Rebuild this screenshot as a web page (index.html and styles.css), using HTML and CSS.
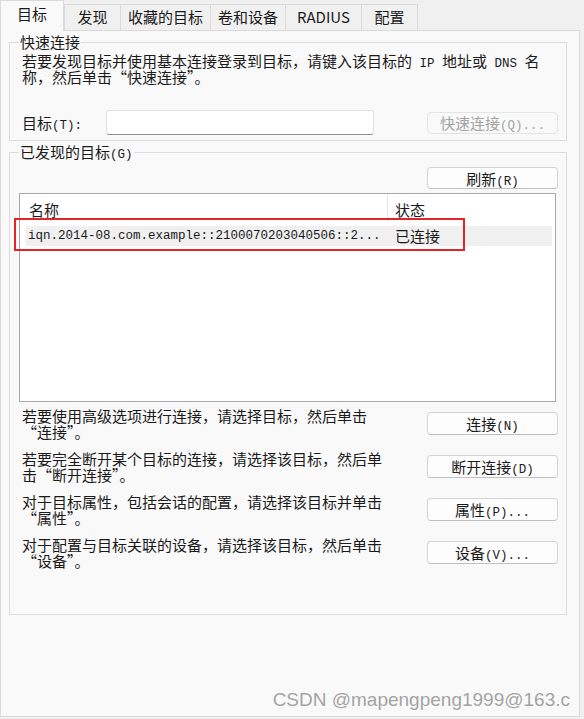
FILE: index.html
```html
<!DOCTYPE html>
<html lang="zh-CN">

<head>
    <meta charset="UTF-8">
    <meta name="viewport" content="width=device-width, initial-scale=1.0">
    <title>iSCSI 发起程序 属性</title>
    <link rel="stylesheet" href="styles.css">
</head>

<body>

    <div class="window">
        <div class="tabs">
            <div class="tab active">目标</div>
            <div class="tab">发现</div>
            <div class="tab">收藏的目标</div>
            <div class="tab">卷和设备</div>
            <div class="tab wide">RADIUS</div>
            <div class="tab">配置</div>
        </div>

        <div class="panel">
            <fieldset class="group quick">
                <legend>快速连接</legend>
                <p class="desc">若要发现目标并使用基本连接登录到目标，请键入该目标的<span class="mono"> IP </span>地址或<span class="mono"> DNS </span>名<br>称，然后单击“快速连接”。</p>
                <div class="target-row">
                    <label class="target-label" for="target">目标<span class="mono">(T):</span></label>
                    <input class="target-input" id="target" type="text">
                    <button class="btn" disabled>快速连接<span class="mono">(Q)...</span></button>
                </div>
            </fieldset>

            <fieldset class="group found">
                <legend>已发现的目标<span class="mono">(G)</span></legend>
                <div class="refresh-row">
                    <button class="btn">刷新<span class="mono">(R)</span></button>
                </div>

                <div class="list">
                    <div class="list-head">
                        <div class="col-name">名称</div>
                        <div class="col-state">状态</div>
                    </div>
                    <div class="list-row">
                        <div class="col-name mono">iqn.2014-08.com.example::2100070203040506::2...</div>
                        <div class="col-state">已连接</div>
                    </div>
                    <!-- red annotation box from the screenshot -->
                    <div class="mark"></div>
                </div>

                <div class="action">
                    <p class="desc">若要使用高级选项进行连接，请选择目标，然后单击<br>“连接”。</p>
                    <button class="btn">连接<span class="mono">(N)</span></button>
                </div>
                <div class="action">
                    <p class="desc">若要完全断开某个目标的连接，请选择该目标，然后单<br>击“断开连接”。</p>
                    <button class="btn">断开连接<span class="mono">(D)</span></button>
                </div>
                <div class="action">
                    <p class="desc">对于目标属性，包括会话的配置，请选择该目标并单击<br>“属性”。</p>
                    <button class="btn">属性<span class="mono">(P)...</span></button>
                </div>
                <div class="action">
                    <p class="desc">对于配置与目标关联的设备，请选择该目标，然后单击<br>“设备”。</p>
                    <button class="btn">设备<span class="mono">(V)...</span></button>
                </div>
            </fieldset>
        </div>

        <div class="watermark">CSDN @mapengpeng1999@163.c</div>
    </div>

</body>

</html>
```

FILE: styles.css
```css
body {
    margin: 0;
    background-color: #f0f0f0;
    font-family: "Noto Sans CJK SC", sans-serif;
    font-size: 15px;
    color: #1a1a1a;
}

.mono {
    font-family: "Liberation Mono", "Noto Sans CJK SC", monospace;
    font-size: 12.5px;
    line-height: 10px;
}

.window {
    position: relative;
    width: 580px;
    height: 719px;
}

/* tab strip */
.tabs {
    display: flex;
    align-items: flex-end;
    height: 31px;
}

.tab {
    box-sizing: border-box;
    height: 26px;
    min-width: 57px;
    margin-bottom: 1px;
    margin-left: -1px;
    padding: 0 7px;
    border: 1px solid #dadada;
    border-bottom: none;
    background-color: #f0f0f0;
    line-height: 24px;
    text-align: center;
    white-space: nowrap;
}

.tab.wide {
    padding: 0 11px;
}

.tab.active {
    position: relative;
    z-index: 1;
    width: 64px;
    height: 31px;
    margin: 0;
    padding-bottom: 4px;
    background-color: #f9f9f9;
    line-height: 26px;
}

.tab.active + .tab {
    margin-left: 0;
}

.panel {
    box-sizing: border-box;
    height: 687px;
    margin-top: -1px;
    padding: 0 12px 0 8px;
    border: 1px solid #dadada;
    background-color: #f9f9f9;
}

/* group boxes */
.group {
    box-sizing: border-box;
    min-width: 0;
    margin: 0;
    padding: 0 8px 7px 9px;
    border: 1px solid #dcdcdc;
}

.group legend {
    padding: 0 1px;
    line-height: 20px;
}

.quick {
    margin-top: 1px;
    padding-bottom: 5px;
}

.found {
    height: 473px;
    margin-top: 1px;
}

.desc {
    margin: 1px 0 0 3px;
    line-height: 16px;
    white-space: nowrap;
}

.target-row {
    display: flex;
    align-items: center;
    height: 25px;
    margin-top: 25px;
}

.target-label {
    width: 84px;
    margin-left: 3px;
}

.target-input {
    box-sizing: border-box;
    width: 268px;
    height: 25px;
    margin: 0;
    border: 1px solid #e3e3e3;
    border-bottom-color: #8f8f8f;
    border-radius: 3px;
    background-color: #fff;
}

.target-row .btn {
    margin-left: auto;
}

.btn {
    box-sizing: border-box;
    width: 131px;
    height: 22px;
    padding: 0;
    border: 1px solid #d3d3d3;
    border-bottom-color: #c0c0c0;
    border-radius: 4px;
    background-color: #fdfdfd;
    font: inherit;
    line-height: 19px;
    color: #1a1a1a;
}

.btn:disabled {
    border-color: #e4e4e4;
    background-color: #f9f9f9;
    color: #a3a3a3;
}

.refresh-row {
    display: flex;
    justify-content: flex-end;
    margin-top: 5px;
}

/* discovered targets list */
.list {
    position: relative;
    box-sizing: border-box;
    height: 209px;
    margin: 4px 2px 6px 0;
    border: 1px solid #a9a9a9;
    background-color: #fff;
}

.list-head {
    display: flex;
    height: 27px;
    padding-top: 6px;
    box-sizing: border-box;
    line-height: 20px;
}

.list-head .col-name {
    box-sizing: border-box;
    width: 368px;
    margin-top: -6px;
    padding: 6px 0 0 9px;
    border-right: 1px solid #e5e5e5;
}

.list-head .col-state {
    padding-left: 7px;
}

.list-row {
    display: flex;
    height: 20px;
    margin: 5px 3px 0 6px;
    background-color: #f0f0f0;
    line-height: 20px;
}

.list-row .col-name {
    width: 360px;
    padding-left: 2px;
    line-height: 20px;
    white-space: nowrap;
}

.list-row .col-state {
    padding-left: 7px;
}

.mark {
    position: absolute;
    left: -6px;
    top: 24px;
    width: 451px;
    height: 33px;
    box-sizing: border-box;
    border: 2px solid #e3232c;
}

/* action rows under the list */
.action {
    display: flex;
    justify-content: space-between;
    height: 43px;
}

.action .btn {
    height: 23px;
    margin-top: 4px;
}

.action .desc {
    margin-top: 0;
}

.watermark {
    position: absolute;
    right: 10px;
    bottom: 8px;
    font-family: "Liberation Sans", Arial, sans-serif;
    font-size: 19px;
    line-height: 22px;
    color: #a3a3a3;
    text-shadow: 0 0 2px #fff;
}
```
